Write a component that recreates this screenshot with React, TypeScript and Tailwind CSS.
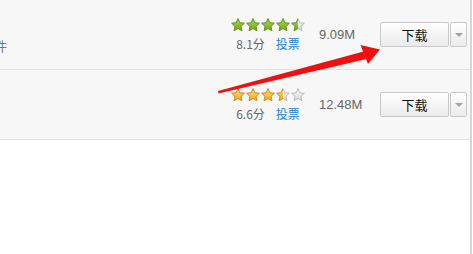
import { useId } from "react";

type Tone = "green" | "gold";

const palette = {
  green: { top: "#b4dc4a", bottom: "#6ea51c", stroke: "#5f9415" },
  gold: { top: "#ffe27a", bottom: "#f0a51a", stroke: "#d28f12" },
  gray: { top: "#fafafa", bottom: "#d6d6d6", stroke: "#b3b3b3" },
};

const STAR =
  "7,0.7 8.85,4.8 13.3,5.26 9.95,8.3 10.9,12.7 7,10.45 3.1,12.7 4.05,8.3 0.7,5.26 5.15,4.8";

const Star = ({ tone, fill }: { tone: Tone; fill: number }) => {
  const id = useId().replace(/:/g, "");
  const c = palette[tone];
  const g = palette.gray;
  return (
    <svg width="14" height="14" viewBox="0 0 14 14" className="block">
      <defs>
        <linearGradient id={`c${id}`} x1="0" y1="0" x2="0" y2="1">
          <stop offset="0" stopColor={c.top} />
          <stop offset="1" stopColor={c.bottom} />
        </linearGradient>
        <linearGradient id={`g${id}`} x1="0" y1="0" x2="0" y2="1">
          <stop offset="0" stopColor={g.top} />
          <stop offset="1" stopColor={g.bottom} />
        </linearGradient>
        <clipPath id={`h${id}`}>
          <rect x="0" y="0" width={14 * fill} height="14" />
        </clipPath>
      </defs>
      <polygon points={STAR} fill={`url(#g${id})`} stroke={g.stroke} strokeWidth="0.9" strokeLinejoin="round" />
      {fill > 0 && (
        <polygon
          points={STAR}
          fill={`url(#c${id})`}
          stroke={c.stroke}
          strokeWidth="0.9"
          strokeLinejoin="round"
          clipPath={`url(#h${id})`}
        />
      )}
    </svg>
  );
};

const Row = ({
  tone,
  stars,
  score,
  size,
  note,
}: {
  tone: Tone;
  stars: number[];
  score: string;
  size: string;
  note?: string;
}) => (
  <div className="flex h-[70px] items-center border-b border-[#e2e2e2] bg-[#f7f7f7] pr-[3px]">
    {/* left description */}
    <div className="flex h-full flex-1 flex-col justify-start">
      {note && (
        <span className="ml-[-6px] mt-[38px] text-[13px] leading-[15px] text-[#6b7684] [font-family:'Noto_Sans_CJK_SC',sans-serif]">
          {note}
        </span>
      )}
    </div>

    {/* rating */}
    <div className="flex w-[74px] flex-col items-center">
      <div className="flex gap-[1px]">
        {stars.map((f, i) => (
          <Star key={i} tone={tone} fill={f} />
        ))}
      </div>
      <div className="mt-[5px] flex items-center text-[12px] leading-[14px] [font-family:'Noto_Sans_CJK_SC',sans-serif]">
        <span className="text-[#666]">{score}</span>
        <span className="ml-[11px] text-[#1a84d6]">投票</span>
      </div>
    </div>

    {/* size */}
    <div className="ml-[14px] w-[61px] text-[13px] text-[#666] [font-family:'Liberation_Sans',sans-serif]">
      {size}
    </div>

    {/* download */}
    <div className="flex h-[25px] gap-[1px]">
      <button className="h-full w-[69px] rounded-[2px] border border-[#c9c9c9] bg-gradient-to-b from-white to-[#ebebeb] text-[13px] text-[#111] [font-family:'Noto_Sans_CJK_SC',sans-serif]">
        下载
      </button>
      <button className="flex h-full w-[17px] items-center justify-center rounded-[2px] border border-[#c9c9c9] bg-gradient-to-b from-white to-[#ebebeb]">
        <span className="h-0 w-0 border-x-[4px] border-t-[4px] border-x-transparent border-t-[#a3a3a3]" />
      </button>
    </div>
  </div>
);

export default function App() {
  return (
    <div className="relative h-[254px] w-[472px] overflow-hidden border-r-2 border-[#d6d6d6] bg-white">
      <Row tone="green" stars={[1, 1, 1, 1, 0.5]} score="8.1分" size="9.09M" note="件" />
      <Row tone="gold" stars={[1, 1, 1, 0.5, 0]} score="6.6分" size="12.48M" />

      {/* red annotation arrow */}
      <svg className="pointer-events-none absolute left-0 top-0" width="473" height="254">
        <polygon points="218,91 363.5,51.5 366.5,59 218.5,93.5" fill="#f01010" />
        <polygon points="380,49.5 360.5,45 368,64" fill="#f01010" />
      </svg>
    </div>
  );
}
